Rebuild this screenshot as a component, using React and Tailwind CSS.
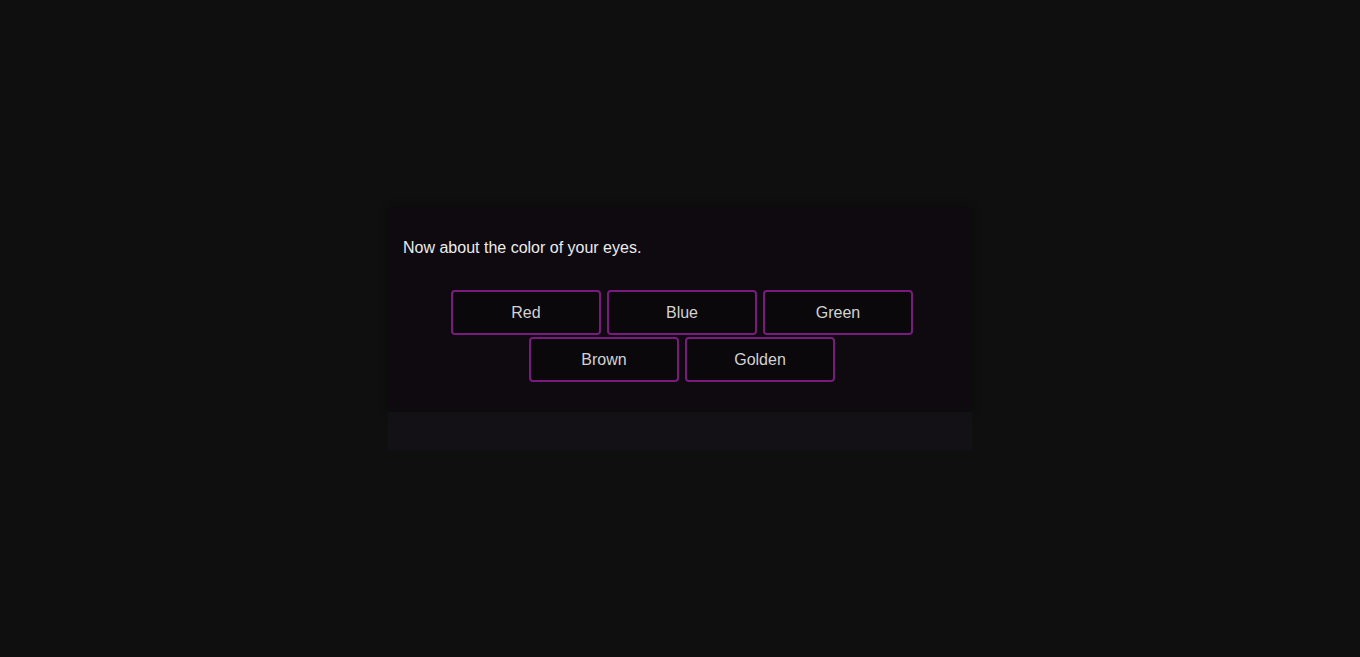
import React from 'react';

const options = [['Red', 'Blue', 'Green'], ['Brown', 'Golden']];

const App = () => {
    return (
        <div className="w-full min-h-[657px] bg-[#0f0f0f] font-['Liberation_Sans',Arial,sans-serif] pt-[208px]">
            <div className="w-[584px] mx-auto">
                <div className="bg-[#0e0a0f] pt-[31px] pb-[28px] px-[15px] shadow-[0_0_8px_rgba(0,0,0,0.4)]">
                    <p className="text-[16px] leading-[18px] text-[#ececec]">Now about the color of your eyes.</p>
                    <div className="mt-[33px] flex flex-col items-center gap-[2px] pl-[4px]">
                        {options.map((row, i) => (
                            <div key={i} className="flex gap-[6px]">
                                {row.map((label) => (
                                    <button
                                        key={label}
                                        className="w-[150px] h-[45px] rounded-[4px] border-2 border-[#7a1a7e] bg-[#0a080b] text-[16px] text-[#d2d2d2]"
                                    >
                                        {label}
                                    </button>
                                ))}
                            </div>
                        ))}
                    </div>
                </div>
                <div className="mt-[2px] h-[38px] bg-[#131116]" />
            </div>
        </div>
    );
};

export default App;
